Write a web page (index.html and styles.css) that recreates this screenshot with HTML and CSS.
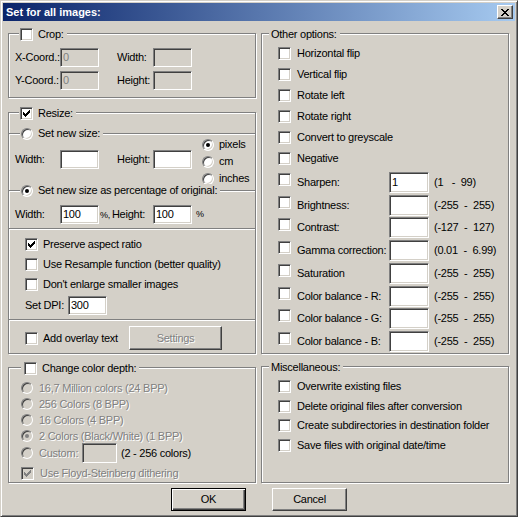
FILE: index.html
```html
<!DOCTYPE html>
<html lang="en">
<head>
<meta charset="utf-8">
<title>Set for all images</title>
<link rel="stylesheet" href="styles.css">
</head>
<body>
<div class="win">
  <div class="title">
    <span>Set for all images:</span>
    <div class="close"><svg width="8" height="7" viewBox="0 0 8 7" shape-rendering="crispEdges"><path d="M0 0h2v1H0zM6 0h2v1H6zM1 1h2v1H1zM5 1h2v1H5zM2 2h4v1H2zM3 3h2v1H3zM2 4h4v1H2zM1 5h2v1H1zM5 5h2v1H5zM0 6h2v1H0zM6 6h2v1H6z"/></svg></div>
  </div>
  <div class="main">
    <div class="col">
      <div class="group crop">
        <div class="gh"><span class="cb"></span><span>Crop:</span></div>
        <div class="frow r1"><span>X-Coord.:</span><span class="edit dis">0</span><span></span><span>Width:</span><span class="edit dis"></span></div>
        <div class="frow r2"><span>Y-Coord.:</span><span class="edit dis">0</span><span></span><span>Height:</span><span class="edit dis"></span></div>
      </div>
      <div class="group resize">
        <div class="gh"><span class="cb"><svg width="7" height="7" viewBox="0 0 7 7" shape-rendering="crispEdges"><path d="M0 2h1v1h1v1h1v-1h1v-1h1v-1h1v-1h1v3h-1v1h-1v1h-1v1h-1v1h-1v-1h-1v-1h-1z"/></svg></span><span>Resize:</span></div>
        <div class="sec s1">
          <div class="sh"><span class="rb"></span><span>Set new size:</span></div>
          <div class="s1body">
            <div class="frow"><span>Width:</span><span class="edit"></span><span></span><span>Height:</span><span class="edit"></span></div>
            <div class="units">
              <div class="ritem"><span class="rb on"></span><span>pixels</span></div>
              <div class="ritem"><span class="rb"></span><span>cm</span></div>
              <div class="ritem"><span class="rb"></span><span>inches</span></div>
            </div>
          </div>
        </div>
        <div class="sec s2">
          <div class="sh"><span class="rb on"></span><span>Set new size as percentage of original:</span></div>
          <div class="prow"><span>Width:</span><span class="edit">100</span><span class="ph"><span class="pct">%,</span><span>Height:</span></span><span class="edit">100</span><span class="pct end">%</span></div>
        </div>
        <div class="sec s3">
          <div class="crow first"><span class="cb"><svg width="7" height="7" viewBox="0 0 7 7" shape-rendering="crispEdges"><path d="M0 2h1v1h1v1h1v-1h1v-1h1v-1h1v-1h1v3h-1v1h-1v1h-1v1h-1v1h-1v-1h-1v-1h-1z"/></svg></span><span>Preserve aspect ratio</span></div>
          <div class="crow"><span class="cb"></span><span>Use Resample function (better quality)</span></div>
          <div class="crow"><span class="cb"></span><span>Don't enlarge smaller images</span></div>
          <div class="dpi"><span>Set DPI:</span><span class="edit">300</span></div>
        </div>
        <div class="sec s4">
          <div class="ovl"><span class="cb"></span><span class="olbl">Add overlay text</span><span class="btn gray">Settings</span></div>
        </div>
      </div>
      <div class="group depth">
        <div class="gh"><span class="cb"></span><span>Change color depth:</span></div>
        <div class="drow first gray"><span class="rb dis"></span><span>16,7 Million colors (24 BPP)</span></div>
        <div class="drow gray"><span class="rb dis"></span><span>256 Colors (8 BPP)</span></div>
        <div class="drow gray"><span class="rb dis"></span><span>16 Colors (4 BPP)</span></div>
        <div class="drow gray"><span class="rb dis on"></span><span>2 Colors (Black/White) (1 BPP)</span></div>
        <div class="drow custom"><span class="rb dis"></span><span class="clbl gray">Custom:</span><span class="edit dis"></span><span class="crng">(2 - 256 colors)</span></div>
        <div class="drow floyd gray"><span class="cb dis"><svg width="7" height="7" viewBox="0 0 7 7" shape-rendering="crispEdges"><path d="M0 2h1v1h1v1h1v-1h1v-1h1v-1h1v-1h1v3h-1v1h-1v1h-1v1h-1v1h-1v-1h-1v-1h-1z"/></svg></span><span>Use Floyd-Steinberg dithering</span></div>
      </div>
    </div>
    <div class="col">
      <div class="group other">
        <div class="gh txt"><span>Other options:</span></div>
        <div class="orow first"><span class="cb"></span><span>Horizontal flip</span></div>
        <div class="orow"><span class="cb"></span><span>Vertical flip</span></div>
        <div class="orow"><span class="cb"></span><span>Rotate left</span></div>
        <div class="orow"><span class="cb"></span><span>Rotate right</span></div>
        <div class="orow"><span class="cb"></span><span>Convert to greyscale</span></div>
        <div class="orow"><span class="cb"></span><span>Negative</span></div>
        <div class="irow first"><span class="cb"></span><span class="lbl">Sharpen:</span><span class="edit">1</span><span class="rng">(1   -  99)</span></div>
        <div class="irow"><span class="cb"></span><span class="lbl">Brightness:</span><span class="edit"></span><span class="rng">(-255  -  255)</span></div>
        <div class="irow"><span class="cb"></span><span class="lbl">Contrast:</span><span class="edit"></span><span class="rng">(-127  -  127)</span></div>
        <div class="irow"><span class="cb"></span><span class="lbl">Gamma correction:</span><span class="edit"></span><span class="rng">(0.01  -  6.99)</span></div>
        <div class="irow"><span class="cb"></span><span class="lbl">Saturation</span><span class="edit"></span><span class="rng">(-255  -  255)</span></div>
        <div class="irow"><span class="cb"></span><span class="lbl">Color balance - R:</span><span class="edit"></span><span class="rng">(-255  -  255)</span></div>
        <div class="irow"><span class="cb"></span><span class="lbl">Color balance - G:</span><span class="edit"></span><span class="rng">(-255  -  255)</span></div>
        <div class="irow"><span class="cb"></span><span class="lbl">Color balance - B:</span><span class="edit"></span><span class="rng">(-255  -  255)</span></div>
      </div>
      <div class="group misc">
        <div class="gh txt"><span>Miscellaneous:</span></div>
        <div class="mrow first"><span class="cb"></span><span>Overwrite existing files</span></div>
        <div class="mrow"><span class="cb"></span><span>Delete original files after conversion</span></div>
        <div class="mrow"><span class="cb"></span><span>Create subdirectories in destination folder</span></div>
        <div class="mrow"><span class="cb"></span><span>Save files with original date/time</span></div>
      </div>
    </div>
  </div>
  <div class="btns"><span class="btn def">OK</span><span class="btn">Cancel</span></div>
</div>
</body>
</html>
```

FILE: styles.css
```css
* { box-sizing: border-box; }
html, body { margin: 0; padding: 0; }
body {
  width: 518px; height: 517px; overflow: hidden;
  background: #d4d0c8;
  font-family: "Liberation Sans", Arial, sans-serif;
  font-size: 11px; line-height: 13px; letter-spacing: -0.25px;
  color: #000; white-space: nowrap;
}
.win {
  width: 518px; height: 517px;
  border: 1px solid; border-color: #d4d0c8 #404040 #404040 #d4d0c8;
  box-shadow: inset 1px 1px #fff, inset -1px -1px #808080;
  padding: 2px;
  display: flex; flex-direction: column;
}
.title {
  flex: none; height: 18px;
  display: flex; align-items: center; justify-content: space-between;
  padding: 0 2px 0 3px;
  background: linear-gradient(to right, #0a246a, #a6caf0);
  color: #fff; font-weight: bold; letter-spacing: 0;
}
.close {
  width: 16px; height: 14px;
  display: flex; align-items: center; justify-content: center;
  background: #d4d0c8;
  border: 1px solid; border-color: #fff #404040 #404040 #fff;
  box-shadow: inset -1px -1px #808080;
}
.close svg { display: block; fill: #000; }
.main { display: grid; grid-template-columns: 248px 248px; column-gap: 5px; padding-left: 5px; }
.col { display: flex; flex-direction: column; }
.group {
  display: flex; flex-direction: column;
  border: 1px solid #808080;
  box-shadow: inset 1px 1px #fff, 1px 1px #fff;
}
.crop { margin-top: 12px; height: 65px; }
.resize { margin-top: 14px; height: 242px; }
.depth { margin-top: 13px; height: 116px; }
.other { margin-top: 12px; height: 321px; }
.misc { margin-top: 12px; height: 117px; }

.gh {
  align-self: flex-start; display: flex; align-items: center; gap: 5px;
  height: 13px; margin: -6px 0 0 10px; padding: 0 3px 0 1px;
  background: #d4d0c8;
}
.depth .gh { margin-left: 12px; padding-left: 3px; }
.gh.txt { margin-left: 7px; padding-left: 2px; }

.sec { display: flex; flex-direction: column; border-top: 1px solid #808080; box-shadow: inset 0 1px #fff; }
.sh {
  align-self: flex-start; display: flex; align-items: center; gap: 5px;
  height: 13px; margin: -7px 0 0 11px; padding: 0 3px 0 1px;
  background: #d4d0c8;
}
.s1 { margin-top: 13px; height: 57px; }
.s2 { height: 38px; }
.s3 { height: 91px; }
.s4 { flex: 1; }

/* controls */
.cb {
  flex: none; width: 13px; height: 13px;
  border: 1px solid; border-color: #808080 #fff #fff #808080;
  box-shadow: inset 1px 1px #404040, inset -1px -1px #d4d0c8;
  background: #fff;
}
.cb svg { display: block; margin: 2px 0 0 2px; fill: #000; }
.cb.dis { background: #d4d0c8; }
.cb.dis svg { fill: #808080; }
.rb {
  flex: none; width: 12px; height: 12px; border-radius: 50%;
  border: 1px solid; border-color: #808080 #fff #fff #808080;
  box-shadow: inset 1px 1px #404040, inset -1px -1px #d4d0c8;
  background: #fff;
  display: flex; align-items: center; justify-content: center;
}
.rb.on::after { content: ""; width: 4px; height: 4px; border-radius: 50%; background: #000; }
.rb.dis { background: #d4d0c8; }
.rb.dis.on::after { background: #808080; }
.edit {
  display: flex; align-items: center; padding-left: 2px;
  border: 1px solid; border-color: #808080 #fff #fff #808080;
  box-shadow: inset 1px 1px #404040, inset -1px -1px #d4d0c8;
  background: #fff; color: #000; text-shadow: none;
}
.edit.dis { background: #d4d0c8; color: #808080; }
.btn {
  width: 75px; height: 23px;
  display: flex; align-items: center; justify-content: center;
  border: 1px solid; border-color: #fff #404040 #404040 #fff;
  box-shadow: inset -1px -1px #808080;
  background: #d4d0c8;
}
.btn.def { border-color: #000; box-shadow: inset 1px 1px #fff, inset -1px -1px #404040, inset -2px -2px #808080; }
.gray { color: #808080; text-shadow: 1px 1px #fff; }

/* crop + sizes */
.frow {
  display: grid; grid-template-columns: 45px 39px 18px 36px 39px;
  align-items: center; height: 19px; padding-left: 6px;
}
.frow .edit { height: 19px; }
.crop .r1 { margin-top: 7px; }
.crop .r2 { margin-top: 4px; }
.s1body { display: flex; align-items: flex-start; }
.s1body .frow { margin-top: 10px; }
.units { display: flex; flex-direction: column; margin: -4px 0 0 10px; }
.ritem { height: 17px; display: flex; align-items: center; gap: 5px; }
.prow {
  display: grid; grid-template-columns: 45px 39px 54px 39px auto;
  align-items: center; height: 19px; padding-left: 6px; margin-top: 8px;
}
.prow .edit { height: 19px; }
.ph { display: flex; align-items: baseline; padding-left: 1px; }
.pct { font-size: 9px; letter-spacing: -0.3px; margin-right: 2px; }
.pct.end { padding-left: 4px; }
.crow { height: 20px; display: flex; align-items: center; gap: 5px; padding-left: 16px; }
.crow.first { margin-top: 5px; }
.dpi {
  display: grid; grid-template-columns: 43px 39px; align-items: center;
  height: 19px; padding-left: 16px; margin-top: 2px;
}
.dpi .edit { height: 19px; }
.ovl { display: flex; align-items: center; height: 24px; padding-left: 16px; margin-top: 6px; }
.olbl { width: 86px; margin-left: 5px; }
.ovl .btn { width: 93px; height: 24px; }

/* color depth */
.drow { height: 16px; display: flex; align-items: center; gap: 6px; padding-left: 12px; }
.drow.first { margin-top: 5px; }
.drow.custom { height: 20px; margin-top: -1px; gap: 0; }
.clbl { width: 49px; padding-left: 6px; }
.drow.custom .edit { width: 35px; height: 20px; }
.crng { margin-left: 4px; }
.drow.floyd { margin-top: 2px; }

/* other options */
.orow { height: 21px; display: flex; align-items: center; gap: 6px; padding-left: 16px; }
.orow.first { margin-top: 2px; }
.irow { height: 22.72px; display: flex; align-items: flex-start; padding-left: 16px; }
.irow.first { margin-top: 2px; }
.irow .cb { margin-top: 2px; }
.irow .lbl { width: 92px; margin: 5px 0 0 6px; }
.irow .edit { width: 40px; height: 21px; margin-top: 1px; }
.irow .rng { margin: 5px 0 0 5px; white-space: pre; }

/* misc */
.mrow { height: 19.5px; display: flex; align-items: center; gap: 6px; padding-left: 16px; }
.mrow.first { margin-top: 3px; }

.btns { display: flex; gap: 26px; margin-top: 5px; padding-left: 168px; }
```
